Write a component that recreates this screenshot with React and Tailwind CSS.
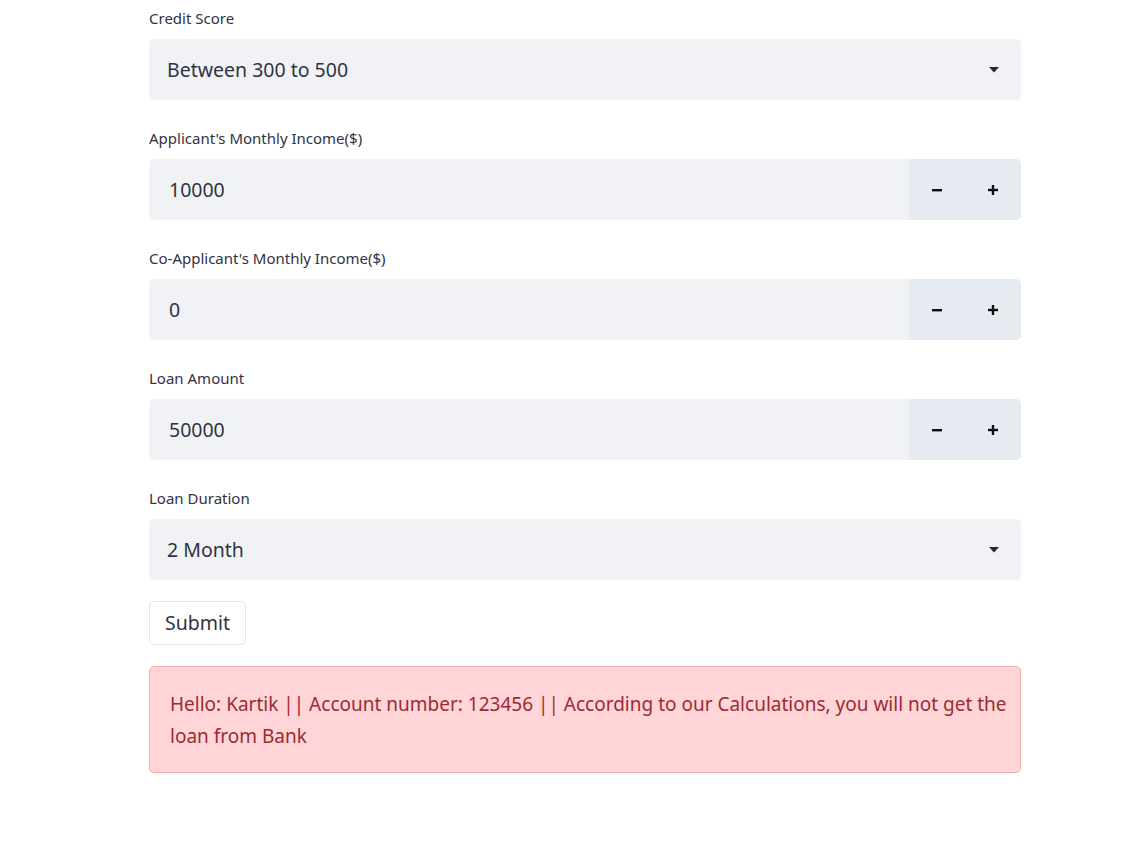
import React from "react";

function Label({ children }) {
  return (
    <div className="text-[15px] leading-[21px] text-[#31333f] mb-[10px]">{children}</div>
  );
}

function SelectBox({ value }) {
  return (
    <div className="h-[61px] rounded-[5px] bg-[#f0f2f6] flex items-center pl-[18px] pr-[22px]">
      <span className="flex-1 text-[19.5px] text-[#31333f]">{value}</span>
      <svg width="10" height="6" viewBox="0 0 10 6">
        <path d="M0 0 L10 0 L5 5.5 Z" fill="#262730" />
      </svg>
    </div>
  );
}

function NumberBox({ value }) {
  return (
    <div className="h-[61px] rounded-[5px] bg-[#f0f2f6] flex overflow-hidden">
      <div className="flex-1 flex items-center pl-[20px] text-[19.5px] text-[#31333f]">{value}</div>
      <div className="w-[112px] bg-[#e6eaf1] flex">
        <div className="w-[56px] flex items-center justify-center">
          <svg width="12" height="12" viewBox="0 0 12 12">
            <rect x="1" y="5" width="10" height="2.4" fill="#111" />
          </svg>
        </div>
        <div className="w-[56px] flex items-center justify-center">
          <svg width="12" height="12" viewBox="0 0 12 12">
            <rect x="1" y="4.8" width="10" height="2.4" fill="#111" />
            <rect x="4.8" y="1" width="2.4" height="10" fill="#111" />
          </svg>
        </div>
      </div>
    </div>
  );
}

export default function App() {
  return (
    <div
      className="w-full min-h-[865px] bg-white"
      style={{ fontFamily: '"Noto Sans", "Open Sans", sans-serif' }}
    >
      <div className="ml-[149px] w-[872px] pt-[8px]">
        <Label>Credit Score</Label>
        <SelectBox value="Between 300 to 500" />
        <div className="h-[28px]" />
        <Label>Applicant's Monthly Income($)</Label>
        <NumberBox value="10000" />
        <div className="h-[28px]" />
        <Label>Co-Applicant's Monthly Income($)</Label>
        <NumberBox value="0" />
        <div className="h-[28px]" />
        <Label>Loan Amount</Label>
        <NumberBox value="50000" />
        <div className="h-[28px]" />
        <Label>Loan Duration</Label>
        <SelectBox value="2 Month" />
        <div className="mt-[21px]">
          <button className="h-[44px] px-[15px] rounded-[5px] border border-[#e2e4ea] bg-white text-[19.5px] text-[#31333f]">
            Submit
          </button>
        </div>
        <div className="mt-[21px] rounded-[5px] border border-[#ffaaae] bg-[#ffd5d8] pl-[20px] pr-[6px] pt-[21px] pb-[20px] text-[19px] leading-[32px] text-[#9c2b34]">
          Hello: Kartik || Account number: 123456 || According to our Calculations, you will not get the loan from Bank
        </div>
      </div>
    </div>
  );
}
